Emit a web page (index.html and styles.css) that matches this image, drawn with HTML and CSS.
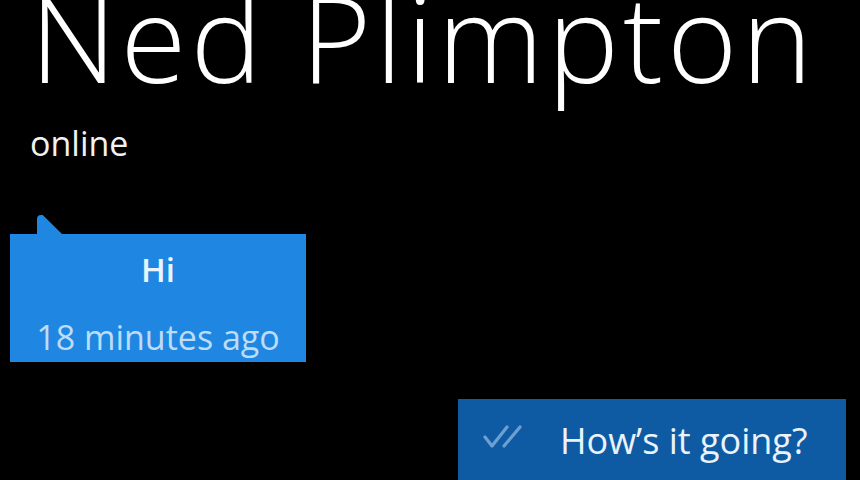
FILE: index.html
```html
<!DOCTYPE html>
<html>
<head>
<meta charset="utf-8">
<link rel="stylesheet" href="styles.css">
</head>
<body>
<div class="screen">
  <header class="contact">
    <h1 class="name">Ned Plimpton</h1>
    <div class="status">online</div>
  </header>
  <div class="thread">
    <div class="bubble incoming">
      <div class="msg">Hi</div>
      <div class="time">18 minutes ago</div>
    </div>
    <div class="bubble outgoing">
      <svg class="ticks" width="40" height="26" viewBox="0 0 40 26">
        <path d="M2 13 L9 22 L24 3" fill="none" stroke="#6c9fd2" stroke-width="3.2" stroke-linecap="round" stroke-linejoin="round"/>
        <path d="M21 22 L37 3" fill="none" stroke="#6c9fd2" stroke-width="3.2" stroke-linecap="round"/>
      </svg>
      <span class="msg">How’s it going?</span>
    </div>
  </div>
</div>
</body>
</html>
```
FILE: styles.css
```css
html, body {
  margin: 0;
  padding: 0;
  background: #000;
  width: 860px;
  height: 480px;
  overflow: hidden;
}
.screen {
  font-family: "Open Sans", "Noto Sans", sans-serif;
  color: #fff;
  display: flex;
  flex-direction: column;
}
.contact {
  padding-left: 30px;
  display: flex;
  flex-direction: column;
}
.name {
  margin: -23px 0 0 0;
  font-size: 120px;
  font-weight: 300;
  line-height: 120px;
  letter-spacing: 4px;
  white-space: nowrap;
}
.status {
  margin-top: 27px;
  font-size: 34px;
  line-height: 38px;
  color: #f2f2f2;
}
.thread {
  display: flex;
  flex-direction: column;
  margin-top: 72px;
}
.bubble {
  position: relative;
}
.incoming {
  margin-left: 10px;
  width: 296px;
  height: 128px;
  background: #1f87e1;
  display: flex;
  flex-direction: column;
  align-items: center;
  box-sizing: border-box;
  padding-top: 17px;
}
.incoming::before {
  content: "";
  position: absolute;
  left: 27px;
  top: -19px;
  width: 26px;
  height: 20px;
  background: #1f87e1;
  clip-path: polygon(0 0, 22% 0, 100% 100%, 0 100%);
  border-top-left-radius: 4px;
}
.incoming .msg {
  font-size: 33px;
  line-height: 38px;
  font-weight: 600;
  color: #e8f4ff;
}
.incoming .time {
  margin-top: 28px;
  font-size: 34px;
  line-height: 40px;
  color: #bcdcf7;
}
.outgoing {
  align-self: flex-end;
  margin-right: 14px;
  margin-top: 37px;
  width: 388px;
  height: 100px;
  background: #0f5ba3;
  display: flex;
  align-items: flex-start;
  box-sizing: border-box;
  padding: 21px 0 0 25px;
}
.ticks {
  margin-top: 4px;
}
.outgoing .msg {
  margin-left: 37px;
  font-size: 36px;
  line-height: 42px;
  color: #eaf3fb;
}
```
